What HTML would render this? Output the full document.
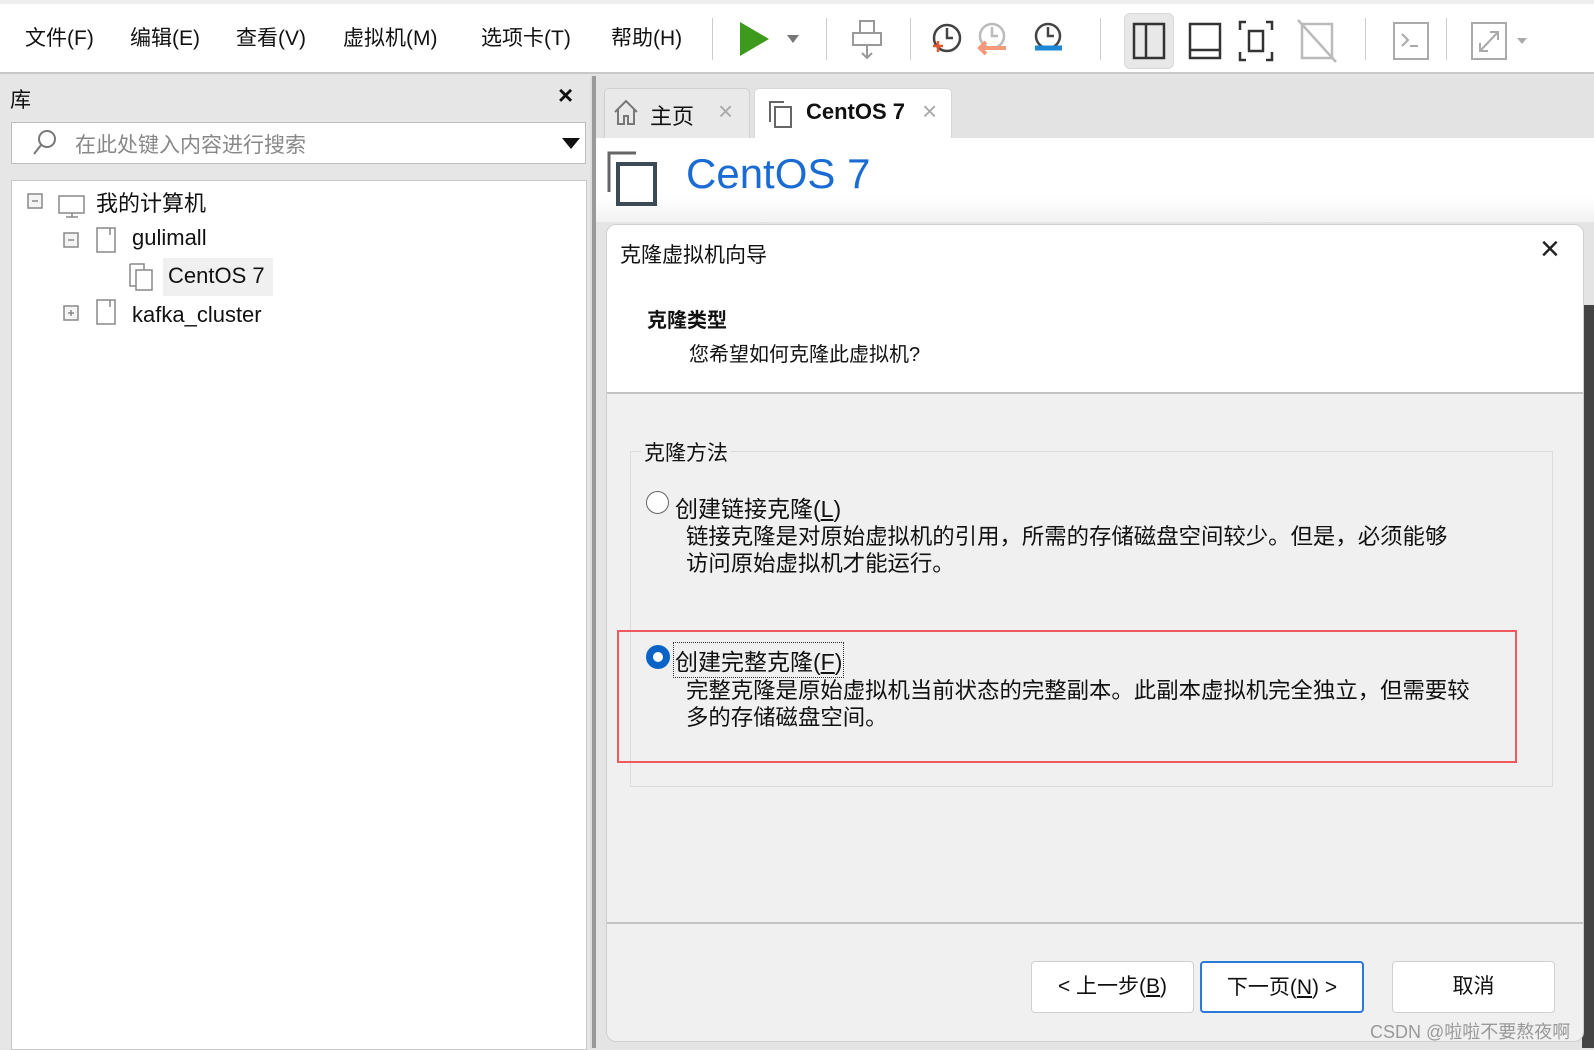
<!DOCTYPE html>
<html><head><meta charset="utf-8"><style>
*{margin:0;padding:0;box-sizing:border-box}
body{width:1594px;height:1048px;overflow:hidden;background:#e4e4e4;font-family:"Liberation Sans","Noto Sans CJK SC",sans-serif;color:#111;position:relative}
.a{position:absolute;white-space:nowrap}
.menu{font-size:21px;top:22px}
.sep{position:absolute;top:18px;width:1px;height:42px;background:#ccc}
.tree{font-size:22px}
.btn{position:absolute;top:961px;height:52px;background:#fff;border:1px solid #d0d0d0;border-radius:4px;font-size:21px;text-align:center;line-height:50px}
</style></head><body>
<div class="a" style="left:0;top:0;width:1594px;height:74px;background:#fff;border-top:4px solid #eee;border-bottom:2px solid #c8c8c8"></div>
<div class="a menu" style="left:25px">文件(F)</div>
<div class="a menu" style="left:130px">编辑(E)</div>
<div class="a menu" style="left:236px">查看(V)</div>
<div class="a menu" style="left:343px">虚拟机(M)</div>
<div class="a menu" style="left:481px">选项卡(T)</div>
<div class="a menu" style="left:611px">帮助(H)</div>
<div class="sep" style="left:712px"></div>
<svg class="a" style="left:735px;top:18px" width="100" height="42"><path d="M5 4 L34 21 L5 38Z" fill="#3d9a1c"/><path d="M52 17 L64 17 L58 25Z" fill="#777"/></svg>
<div class="sep" style="left:826px"></div>
<svg class="a" style="left:850px;top:18px" width="40" height="44" fill="none" stroke="#999" stroke-width="2"><rect x="10" y="3" width="14" height="12"/><rect x="3" y="15" width="28" height="12"/><path d="M17 27 V40 M12 35 L17 40 L22 35"/></svg>
<div class="sep" style="left:910px"></div>
<svg class="a" style="left:930px;top:16px" width="150" height="46" fill="none" stroke-width="2.5"><circle cx="17" cy="22" r="13" stroke="#444"/><path d="M17 12 V22 H23" stroke="#444"/><path d="M3 30 H13 M8 25 V36" stroke="#e5572c"/><circle cx="62" cy="20" r="12" stroke="#bbb"/><path d="M62 11 V20 H68" stroke="#bbb"/><path d="M50 32 H76 M56 26 L50 32 L56 38" stroke="#f29a7a" stroke-width="4"/><circle cx="118" cy="20" r="12" stroke="#444"/><path d="M118 11 V20 H124" stroke="#444"/><path d="M105 32 H132" stroke="#1e88d6" stroke-width="5"/></svg>
<div class="sep" style="left:1100px"></div>
<div class="a" style="left:1124px;top:13px;width:50px;height:56px;background:#e8e8e8;border:1px solid #d8d8d8;border-radius:6px"></div>
<svg class="a" style="left:1120px;top:18px" width="360" height="46" fill="none" stroke="#333" stroke-width="2.5"><rect x="14" y="6" width="30" height="34"/><path d="M26 6 V40"/><rect x="70" y="6" width="30" height="34"/><path d="M70 32 H100"/><path d="M126 4 H120 V12 M146 4 H152 V12 M120 34 V42 H126 M152 34 V42 H146"/><rect x="129" y="13" width="14" height="20"/><g stroke="#bbb"><rect x="182" y="6" width="30" height="34"/><path d="M178 2 L216 44"/></g></svg>
<div class="sep" style="left:1365px"></div>
<svg class="a" style="left:1390px;top:18px" width="140" height="46" fill="none" stroke="#aaa" stroke-width="2"><rect x="4" y="5" width="34" height="36"/><path d="M12 16 L18 22 L12 28 M20 28 H28"/></svg>
<div class="sep" style="left:1446px"></div>
<svg class="a" style="left:1470px;top:18px" width="60" height="46" fill="none" stroke="#aaa" stroke-width="2"><rect x="2" y="5" width="34" height="36"/><path d="M10 33 L28 14 M20 14 H28 V22 M10 25 V33 H18"/><path d="M47 20 L57 20 L52 26Z" fill="#aaa" stroke="none"/></svg>

<div class="a" style="left:0;top:76px;width:594px;height:972px;background:#e6e6e6"></div>
<div class="a" style="left:10px;top:84px;font-size:21px">库</div>
<div class="a" style="left:558px;top:80px;font-size:26px;font-weight:bold">×</div>
<div class="a" style="left:11px;top:122px;width:575px;height:42px;background:#fff;border:1px solid #bdbdbd"></div>
<svg class="a" style="left:30px;top:128px" width="30" height="30" fill="none" stroke="#777" stroke-width="2"><circle cx="17" cy="11" r="8"/><path d="M11 17 L4 26"/></svg>
<div class="a" style="left:75px;top:129px;font-size:21px;color:#888">在此处键入内容进行搜索</div>
<svg class="a" style="left:561px;top:137px" width="20" height="14"><path d="M1 1 H19 L10 12Z" fill="#111"/></svg>
<div class="a" style="left:11px;top:180px;width:576px;height:870px;background:#fff;border:1px solid #c8c8c8"></div>
<svg class="a" style="left:26px;top:190px" width="260" height="150" fill="none" stroke="#888" stroke-width="1.5">
<rect x="2" y="4" width="14" height="14" fill="#f4f4f4"/><path d="M6 11 H12"/>
<rect x="33" y="6" width="25" height="17"/><path d="M40 27 H52 M46 23 V27"/>
<rect x="38" y="43" width="14" height="14" fill="#f4f4f4"/><path d="M42 50 H48"/>
<path d="M71 38 H89 V62 H71Z M84 38 V45"/>
<path d="M104 74 H118 V80 M104 74 V96 H110"/><rect x="110" y="80" width="16" height="20"/>
<rect x="38" y="116" width="14" height="14" fill="#f4f4f4"/><path d="M42 123 H48 M45 120 V126"/>
<path d="M71 110 H89 V134 H71Z M84 110 V117"/>
</svg>
<div class="a tree" style="left:96px;top:186px">我的计算机</div>
<div class="a tree" style="left:132px;top:225px">gulimall</div>
<div class="a" style="left:163px;top:258px;width:110px;height:38px;background:#f0f0f0"></div>
<div class="a tree" style="left:168px;top:263px">CentOS 7</div>
<div class="a tree" style="left:132px;top:302px">kafka_cluster</div>

<div class="a" style="left:590px;top:76px;width:6px;height:972px;background:#9a9a9a;border-left:2px solid #ddd"></div>

<div class="a" style="left:596px;top:76px;width:998px;height:62px;background:#e3e3e3"></div>
<div class="a" style="left:604px;top:88px;width:146px;height:50px;background:#e9e9e9;border:1px solid #d0d0d0;border-bottom:none;border-radius:5px 5px 0 0"></div>
<svg class="a" style="left:612px;top:98px" width="30" height="30" fill="none" stroke="#777" stroke-width="2"><path d="M3 14 L14 3 L25 14 M6 11 V26 H12 V18 H16 V26 H22 V11"/></svg>
<div class="a" style="left:650px;top:99px;font-size:22px">主页</div>
<div class="a" style="left:718px;top:96px;font-size:26px;color:#aaa">×</div>
<div class="a" style="left:754px;top:88px;width:198px;height:50px;background:#fff;border:1px solid #d8d8d8;border-bottom:none;border-radius:5px 5px 0 0"></div>
<svg class="a" style="left:768px;top:100px" width="30" height="30" fill="none" stroke="#666" stroke-width="2"><path d="M2 22 V2 H16"/><rect x="7" y="7" width="16" height="20"/></svg>
<div class="a" style="left:806px;top:99px;font-size:22px;font-weight:bold">CentOS 7</div>
<div class="a" style="left:922px;top:96px;font-size:26px;color:#aaa">×</div>

<div class="a" style="left:596px;top:138px;width:998px;height:84px;background:linear-gradient(#fff 70%,#f2f2f2)"></div>
<svg class="a" style="left:606px;top:150px" width="62" height="60" fill="none" stroke="#444" stroke-width="3"><path d="M3 42 V3 H30" stroke="#666"/><rect x="12" y="14" width="37" height="40" stroke="#3c4a55" stroke-width="4"/></svg>
<div class="a" style="left:686px;top:150px;font-size:42px;color:#1a6cd4">CentOS 7</div>

<div class="a" style="left:1582px;top:305px;width:12px;height:743px;background:#444"></div>
<div class="a" style="left:606px;top:224px;width:978px;height:818px;background:#f0f0f0;border:1px solid #cfcfcf;border-radius:10px;overflow:hidden">
  <div class="a" style="left:0;top:0;width:978px;height:169px;background:#fff;border-bottom:2px solid #c4c4c4"></div>
</div>
<div class="a" style="left:620px;top:239px;font-size:21px">克隆虚拟机向导</div>
<div class="a" style="left:1540px;top:230px;font-size:34px;color:#222;font-weight:300">×</div>
<div class="a" style="left:647px;top:304px;font-size:20px;font-weight:bold">克隆类型</div>
<div class="a" style="left:689px;top:338px;font-size:20px">您希望如何克隆此虚拟机?</div>

<div class="a" style="left:630px;top:451px;width:923px;height:336px;border:1px solid #dcdcdc"></div>
<div class="a" style="left:641px;top:437px;font-size:21px;background:#f0f0f0;padding:0 3px">克隆方法</div>
<div class="a" style="left:646px;top:491px;width:23px;height:23px;border:1.5px solid #666;border-radius:50%;background:#fff"></div>
<div class="a" style="left:675px;top:490px;font-size:23px">创建链接克隆(<u>L</u>)</div>
<div class="a" style="left:686px;top:523px;font-size:22.4px;line-height:27px">链接克隆是对原始虚拟机的引用，所需的存储磁盘空间较少。但是，必须能够<br>访问原始虚拟机才能运行。</div>
<div class="a" style="left:617px;top:630px;width:900px;height:133px;border:2px solid #ee5a5e"></div>
<div class="a" style="left:646px;top:645px;width:24px;height:24px;border:7px solid #0a64c8;border-radius:50%;background:#fff"></div>
<div class="a" style="left:673px;top:642px;font-size:23px;border:1px dotted #333;padding:0 1px">创建完整克隆(<u>F</u>)</div>
<div class="a" style="left:686px;top:677px;font-size:22.4px;line-height:27px">完整克隆是原始虚拟机当前状态的完整副本。此副本虚拟机完全独立，但需要较<br>多的存储磁盘空间。</div>

<div class="a" style="left:607px;top:922px;width:976px;height:2px;background:#c4c4c4"></div>
<div class="btn" style="left:1031px;width:163px">&lt; 上一步(<u>B</u>)</div>
<div class="btn" style="left:1200px;width:164px;border:2px solid #2b7ad6">下一页(<u>N</u>) &gt;</div>
<div class="btn" style="left:1392px;width:163px">取消</div>
<div class="a" style="left:1370px;top:1018px;font-size:18px;color:#999">CSDN @啦啦不要熬夜啊</div>
</body></html>
